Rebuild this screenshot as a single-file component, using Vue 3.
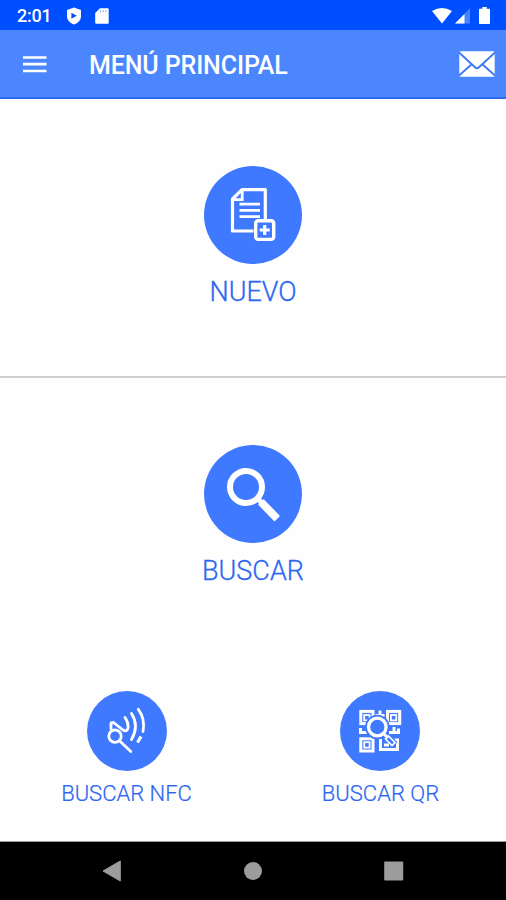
<script setup>
const searches = [
  { id: 'nfc', label: 'BUSCAR NFC' },
  { id: 'qr', label: 'BUSCAR QR' },
]
</script>

<template>
  <div class="screen">
    <div class="status">
      <span class="time">2:01</span>
      <svg class="shield" width="16" height="18" viewBox="0 0 16 18">
        <path d="M8 .4 15 3v6c0 4.200-3 7-7 8.600C4 16 1 13.200 1 9V3z" fill="#fff" />
        <path d="M5.400 5.700v6L10.800 8.700z" fill="#004fff" />
      </svg>
      <svg class="sd" width="14" height="16" viewBox="0 0 14 16">
        <path d="M5 .2h7.500c.7 0 1.200.5 1.200 1.200v13c0 .8-.5 1.300-1.200 1.300h-11C.7 15.700.2 15.200.2 14.400V5z" fill="#fff" />
        <path d="M5.500 2v2.500M8.200 2v2.500M10.900 2v2.500" stroke="#9dbbff" stroke-width="1.200" />
      </svg>
      <span class="grow"></span>
      <svg width="20" height="16" viewBox="0 0 20 16">
        <path d="M0 3Q10-2.800 20 3L10 15.500z" fill="#fff" />
      </svg>
      <svg class="signal" width="15" height="16" viewBox="0 0 15 16">
        <path d="M0 15.500 15 .3v15.200z" fill="#4a83ff" />
        <path d="M0 15.500 9.500 5.900v9.600z" fill="#fff" />
      </svg>
      <svg class="battery" width="11" height="17" viewBox="0 0 11 17">
        <path d="M3.300 0h4.400v1.700H10c.6 0 1 .4 1 1V16c0 .6-.4 1-1 1H1c-.6 0-1-.4-1-1V2.700c0-.6.4-1 1-1h2.300z" fill="#fff" />
      </svg>
    </div>

    <header class="bar">
      <svg class="burger" width="24" height="18" viewBox="0 0 24 18">
        <path d="M0 2.500h23.500M0 9.200h23.500M0 16h23.500" stroke="#fff" stroke-width="2.700" />
      </svg>
      <h1>MENÚ PRINCIPAL</h1>
      <svg class="mail" width="36" height="26" viewBox="0 0 36 26">
        <rect x=".3" y=".3" width="35.400" height="25.400" rx="1.500" fill="#fff" />
        <path d="M0 1.500 16.300 16.500q1.700 1.500 3.400 0L36 1.500M0 24.500 12.700 13.200M36 24.500 23.300 13.200" fill="none" stroke="#3e78f5" stroke-width="1.900" />
      </svg>
    </header>

    <section class="panel create">
      <svg width="98" height="98" viewBox="0 0 98 98">
        <circle cx="49" cy="49" r="49" fill="#3f79ff" />
        <g fill="none" stroke="#fff" stroke-width="3.200">
          <path d="M49.500 65H28.500V33L38 23.700H61.300V53" stroke-linejoin="round" />
          <path d="M28.500 33.700H38.200V23.700" stroke-width="2.800" />
          <path d="M35.500 38.200H56M35.500 44.300H56M35.500 50.600H56" stroke-width="2.800" />
          <rect x="51.700" y="54.700" width="18" height="18.700" rx="2.500" stroke-width="3.400" />
          <path d="M60.700 59v10M55.700 64h10" stroke-width="3.200" />
        </g>
      </svg>
      <div class="label">NUEVO</div>
    </section>

    <section class="panel find">
      <svg width="98" height="98" viewBox="0 0 98 98">
        <circle cx="49" cy="49" r="49" fill="#3f79ff" />
        <g fill="none" stroke="#fff">
          <circle cx="42" cy="42" r="16" stroke-width="6" />
          <path d="M53 53 60 60" stroke-width="5" />
          <path d="M55.500 59.500 59.500 55.500 74.500 71 70.500 75z" fill="#fff" stroke-width="2.200" stroke-linejoin="round" />
        </g>
      </svg>
      <div class="label">BUSCAR</div>
    </section>

    <section class="row">
      <div v-for="s in searches" :key="s.id" class="cell">
        <svg width="80" height="80" viewBox="0 0 80 80">
          <circle cx="40" cy="40" r="40" fill="#3f79ff" />
          <g v-if="s.id === 'nfc'" fill="none" stroke="#fff" stroke-width="2.800" stroke-linecap="round" stroke-linejoin="round">
            <circle cx="28" cy="45.200" r="6.200" />
            <path d="M32.500 49.700 43.800 60.500" />
            <path d="M24 38V31.800L26.500 31.500 36 39Q40.500 41.500 41.200 36Q41.200 31 38 26.500" />
            <path d="M44.500 22.500Q52.500 35 44.500 48.500" />
            <path d="M51.300 18.300Q58.500 28 56 40.500" />
            <path d="M54 45.500 50.500 51.500" stroke-width="3.200" stroke-linecap="butt" />
          </g>
          <g v-else fill="none" stroke="#fff" stroke-width="3">
            <rect x="20.800" y="20.400" width="12.200" height="12.200" />
            <rect x="47.500" y="20.400" width="12.200" height="12.200" />
            <rect x="20.800" y="47.800" width="12.200" height="12.200" />
            <g stroke-width="1.800">
              <rect x="24.200" y="24" width="5.400" height="5.400" />
              <rect x="50.900" y="24" width="5.400" height="5.400" />
              <rect x="24.200" y="51.200" width="5.400" height="5.400" />
            </g>
            <path d="M35.500 24.500h9M40 19.500v7M20.500 37v6M19.500 41.500h8M54 36v7M49 41.500h9.500v-4M40.500 48v10.500h17V50M44 54h5M54.500 49h4.500" />
            <path d="M45 44 55 53.500" stroke="#3f79ff" stroke-width="7" />
            <circle cx="37.300" cy="36" r="9.800" fill="#3f79ff" stroke="#3f79ff" stroke-width="5" />
            <circle cx="37.300" cy="36" r="8.800" stroke-width="3.300" />
            <path d="M43.500 42.500 48 47" />
            <path d="m48.500 45 6.500 6.500-3 3-6.500-6.500z" stroke-width="1.700" />
          </g>
        </svg>
        <div class="small-label" :class="s.id">{{ s.label }}</div>
      </div>
    </section>

    <nav class="nav">
      <svg width="20" height="22" viewBox="0 0 20 22"><path d="M1 11 18.300 1v20z" fill="#9c9c9c" stroke="#9c9c9c" stroke-linejoin="round" /></svg>
      <svg width="18" height="18" viewBox="0 0 18 18"><circle cx="9" cy="9" r="9" fill="#9c9c9c" /></svg>
      <svg width="20" height="20" viewBox="0 0 20 20"><rect x=".2" y=".5" width="19" height="19" rx="1" fill="#9c9c9c" /></svg>
    </nav>
  </div>
</template>

<style>
body { margin: 0; background: #fff; }
</style>

<style scoped>
.screen {
  width: 506px;
  height: 900px;
  display: flex;
  flex-direction: column;
  background: #fefefe;
  font-family: Roboto, "Liberation Sans", sans-serif;
  overflow: hidden;
}
svg { display: block; flex: none; }
.status {
  box-sizing: border-box;
  height: 30px;
  padding: 1px 16px 0 17px;
  display: flex;
  align-items: center;
  background: #004fff;
  color: #fff;
}
.time { width: 49px; font-size: 18px; font-weight: 500; line-height: 28px; letter-spacing: -0.2px; }
.sd { margin-left: 13px; }
.grow { flex: 1; }
.signal { margin-left: 3px; }
.battery { margin-left: 9px; }
.bar {
  box-sizing: border-box;
  height: 69px;
  padding: 0 11px 0 23px;
  display: flex;
  align-items: center;
  background: #4b86ff;
  border-bottom: 2px solid #2a6af0;
  color: #fff;
}
.burger { margin-right: 42px; }
h1 { flex: 1; margin: 5px 0 0; font-size: 25px; line-height: 30px; font-weight: 500; letter-spacing: -0.12px; white-space: nowrap; }
.panel {
  box-sizing: border-box;
  display: flex;
  flex-direction: column;
  align-items: center;
  color: #2c66f2;
}
.create { height: 279px; padding-top: 67px; border-bottom: 2px solid #cfcfcf; }
.find { height: 313px; padding-top: 67px; }
.label { margin-top: 12px; font-size: 27px; line-height: 32px; font-weight: 300; white-space: nowrap; -webkit-text-stroke: 0.3px #2c66f2; }
.row { height: 150px; display: grid; grid-template-columns: 1fr 1fr; }
.cell { display: flex; flex-direction: column; align-items: center; color: #2c66f2; }
.small-label { margin-top: 9px; font-size: 22px; line-height: 28px; font-weight: 300; white-space: nowrap; -webkit-text-stroke: 0.2px #2c66f2; }
.qr { padding-left: 2px; }
.nav {
  box-sizing: border-box;
  height: 59px;
  padding: 0 102px;
  border-top: 1px solid #999;
  display: flex;
  align-items: center;
  justify-content: space-between;
  background: #000;
}
</style>
